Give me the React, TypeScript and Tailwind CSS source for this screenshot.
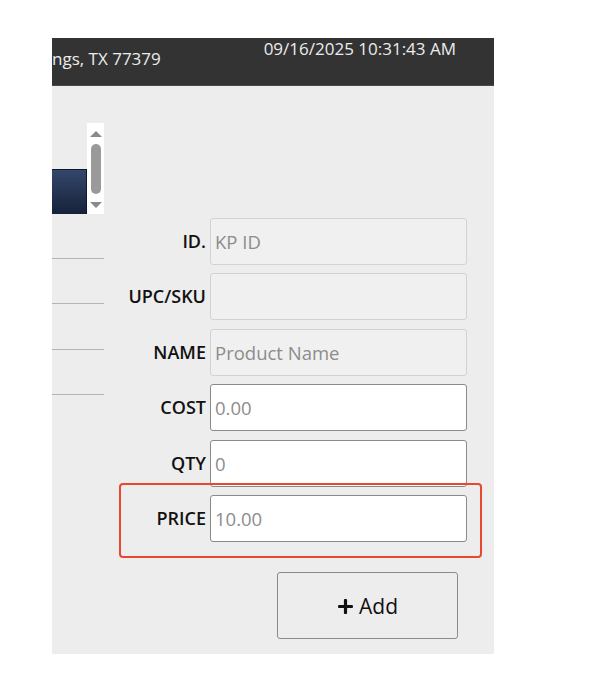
import { FaPlus } from "react-icons/fa";

const font = { fontFamily: '"Open Sans", "Noto Sans", sans-serif' };

type Field = { label: string; placeholder: string; disabled?: boolean; highlight?: boolean };

const fields: Field[] = [
  { label: "ID.", placeholder: "KP ID", disabled: true },
  { label: "UPC/SKU", placeholder: "", disabled: true },
  { label: "NAME", placeholder: "Product Name", disabled: true },
  { label: "COST", placeholder: "0.00" },
  { label: "QTY", placeholder: "0" },
  { label: "PRICE", placeholder: "10.00", highlight: true }
];

function ScrollBar() {
  return (
    <div className="flex h-full w-[17px] flex-col items-center bg-white pt-[8px]">
      <div className="h-0 w-0 border-x-[6px] border-b-[6px] border-x-transparent border-b-[#8a8a8a]" />
      <div className="mt-[7px] h-[50px] w-[10px] rounded-full bg-[#9a9a9a]" />
      <div className="mt-[8px] h-0 w-0 border-x-[6px] border-t-[6px] border-x-transparent border-t-[#8a8a8a]" />
    </div>
  );
}

function ProductList() {
  return (
    <div className="flex w-[52px] shrink-0 flex-col">
      <div className="mt-[37px] flex h-[91px] items-end">
        <div className="h-[45px] w-[35px] border-t border-r border-[#111827] bg-gradient-to-b from-[#34476c] to-[#16223a]" />
        <ScrollBar />
      </div>
      <div className="h-[45px] border-b border-[#b4b4b4]" />
      <div className="h-[45px] border-b border-[#b4b4b4]" />
      <div className="h-[46px] border-b border-[#b4b4b4]" />
      <div className="h-[45px] border-b border-[#b4b4b4]" />
    </div>
  );
}

function FieldRow({ field }: { field: Field }) {
  return (
    <div className="relative flex h-[47px] items-center">
      <label className="w-[102px] text-right text-[18px] font-semibold text-[#111]">{field.label}</label>
      <input
        readOnly
        placeholder={field.placeholder}
        className={`ml-[4px] h-[47px] w-[257px] rounded-[3px] px-[4px] text-[18.5px] outline-none placeholder:text-[#8c8c8c] ${
          field.disabled ? "border border-[#d2d2d2] bg-[#f0f0f0]" : "border border-[#8a8a8a] bg-white"
        }`}
        style={font}
      />
      {field.highlight && (
        <div className="pointer-events-none absolute -top-[12px] -bottom-[16px] left-[15px] right-[12px] rounded-[4px] border-2 border-[#e9472f]" />
      )}
    </div>
  );
}

export default function App() {
  return (
    <div className="h-[677px] w-full bg-white pt-[38px] pl-[52px]" style={font}>
      <div className="flex h-[616px] w-[442px] flex-col overflow-hidden">
        <header className="flex h-[48px] shrink-0 items-start justify-between border-b border-[#4a4a4a] bg-[#333333] pr-[38px] text-[#ececec]">
          <span className="mt-[8px] text-[17px]">ngs, TX 77379</span>
          <span className="mt-[-2px] text-[17px]">09/16/2025 10:31:43 AM</span>
        </header>
        <div className="flex flex-1 bg-[#ededed]">
          <ProductList />
          <div className="flex flex-1 flex-col pt-[132px]">
            <div className="flex flex-col gap-[8.4px]">
              {fields.map((f) => (
                <FieldRow key={f.label} field={f} />
              ))}
            </div>
            <div className="mt-[30px] pl-[173px]">
              <button
                type="button"
                className="flex h-[67px] w-[181px] items-center justify-center gap-[5px] rounded-[3px] border border-[#8a8a8a] bg-[#ededed] pt-[3px] text-[21px] text-[#111]"
              >
                <FaPlus className="h-[17px] w-[17px]" />
                <span>Add</span>
              </button>
            </div>
          </div>
        </div>
      </div>
    </div>
  );
}
